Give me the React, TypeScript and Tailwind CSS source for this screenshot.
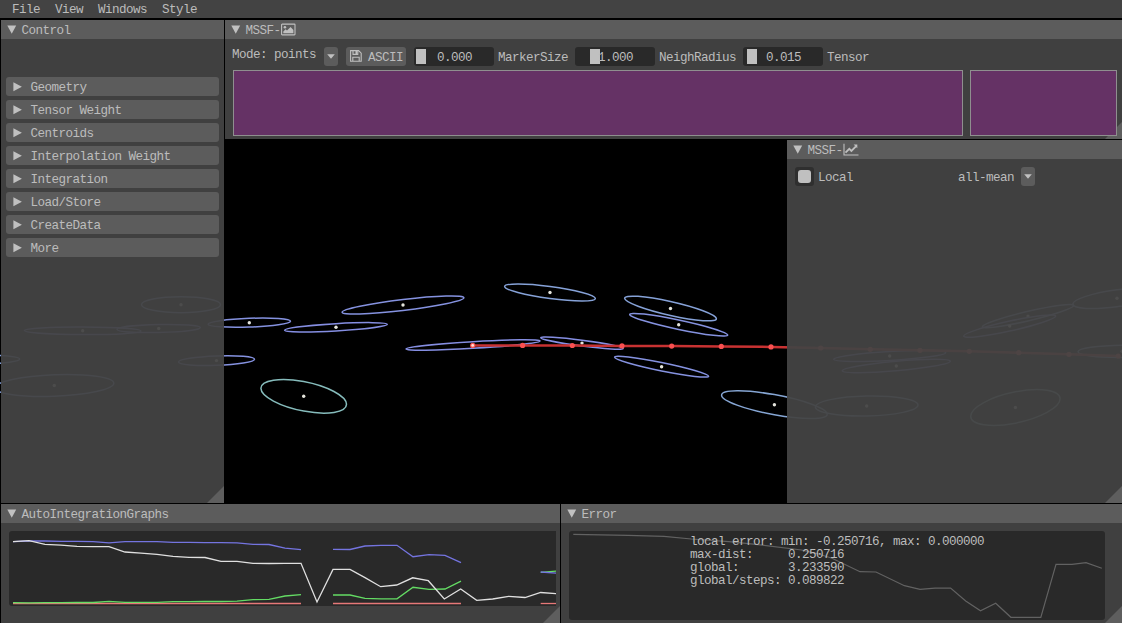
import type { ReactNode } from "react";

type EllipseRow = [cx: number, cy: number, rx: number, slant: number, ry: number, color: string];

const ELLIPSES: EllipseRow[] = [
  [181, 304.7, 39.5, 0, 8, "#84a0dc"],
  [82.7, 330.8, 58.3, 0.3, 3.8, "#8088e6"],
  [158.7, 328.5, 41.7, -0.9, 4, "#8088e6"],
  [-15, 359.7, 34.7, -0.7, 4.2, "#84a0dc"],
  [54.3, 385.5, 59.5, -2.3, 10.7, "#84a0dc"],
  [249.3, 322.7, 41.2, -1.5, 4.4, "#8592e0"],
  [216.5, 360.6, 38, -1.4, 4.7, "#8592e0"],
  [303.7, 396.3, 42.8, 8, 14.8, "#86bcbc"],
  [403, 305, 60.9, -7.2, 5.5, "#8592e0"],
  [336, 327.3, 51.4, -3, 3.6, "#858ee2"],
  [473, 345, 67, -4, 3.3, "#858ee2"],
  [550, 292.5, 45.4, 6, 6.1, "#86a2d8"],
  [670.5, 308.5, 45.9, 10.2, 7, "#86a2d8"],
  [678.7, 324.7, 49, 10.3, 4.7, "#8592e0"],
  [582, 343.1, 41.2, 5.4, 2.9, "#858ee2"],
  [661.6, 366.7, 47, 9.5, 4.2, "#8592e0"],
  [774.4, 404.7, 52.8, 9.5, 10.1, "#86a6d4"],
  [866.7, 406, 51.3, -1, 10, "#86a6d4"],
  [1015.4, 407.5, 44.7, -8.7, 15.7, "#86b0b8"],
  [889.7, 356, 56, -3.3, 4.4, "#8088e6"],
  [896.3, 366, 54, -4.7, 4.8, "#8088e6"],
  [1028, 316.1, 45.6, -10.6, 4.8, "#86a2d8"],
  [1009.7, 326.1, 46, -10, 5, "#8592e0"],
  [1117, 298.3, 44.2, -5.8, 8.5, "#86a2d8"],
  [1122, 351.3, 44, -0.5, 6.1, "#86a2d8"],
];

const TRACK: [number, number][] = [
  [472.7, 345.4], [522.6, 345.4], [572.3, 345.5], [622, 345.9], [671.7, 346.1], [721.3, 346.4], [771, 346.9],
  [820.7, 348], [870.3, 349.3], [920, 350.3], [969.3, 351.3], [1018.7, 352.7], [1069, 354.3], [1118.3, 356],
];

function Scene() {
  return (
    <svg className="absolute inset-0" width="1122" height="623" fill="none">
      {ELLIPSES.map(([cx, cy, rx, slant, ry, color], i) => (
        <g key={i}>
          <ellipse
            rx={rx}
            ry={ry}
            transform={`matrix(1 ${slant / rx} 0 1 ${cx} ${cy})`}
            stroke={color}
            strokeWidth="1.5"
            vectorEffect="non-scaling-stroke"
          />
          <circle cx={cx} cy={cy} r="1.7" fill="#e4e4dc" />
        </g>
      ))}
      <polyline points={TRACK.map((p) => p.join(",")).join(" ")} stroke="#c83232" strokeWidth="2.5" />
      {TRACK.map(([x, y], i) => (
        <circle key={i} cx={x} cy={y} r="2.6" fill="#fa5050" />
      ))}
      <circle cx="472.7" cy="345.4" r="1.4" fill="#ffe0dc" />
    </svg>
  );
}

function Down({ className = "" }: { className?: string }) {
  return (
    <svg className={className} width="10" height="9" viewBox="0 0 10 9" fill="#c0c0c0">
      <path d="M0.3 0.4H9.2L4.75 8.8Z" />
    </svg>
  );
}

function PictureIcon() {
  return (
    <svg className="ml-[0.5px]" width="15" height="13" viewBox="0 0 15 13">
      <rect x="0.6" y="1.1" width="13.4" height="10.8" rx="0.6" fill="none" stroke="#c0c0c0" strokeWidth="1.1" />
      <circle cx="3.9" cy="4.3" r="1.3" fill="#c0c0c0" />
      <path d="M2.3 10.3V8.5L4.6 6.3L6 7.6L9.6 4L12.4 6.9V10.3Z" fill="#c0c0c0" />
    </svg>
  );
}

function ChartIcon() {
  return (
    <svg className="ml-[0.5px]" width="16" height="13" viewBox="0 0 16 13" fill="none" stroke="#c0c0c0">
      <path d="M1 0.8V12H15.5" strokeWidth="1.1" />
      <path d="M2.5 9.6L6.3 5.8L8.4 7.9L12.9 3.3" strokeWidth="1.8" />
      <path d="M10.6 1.4H14.3V5.3Z" fill="#c0c0c0" stroke="none" />
    </svg>
  );
}

function SaveIcon() {
  return (
    <svg className="mb-px" width="12" height="12" viewBox="0 0 12 12" fill="none" stroke="#c0c0c0" strokeWidth="1.1">
      <path d="M0.6 0.6H8.6L11.2 3.2V11.3H0.6Z" />
      <path d="M2.8 11V7.3H9.2V11" />
      <path d="M3 0.8V4.4H7.8V0.8" />
      <path d="M6.3 1V4" strokeWidth="1.6" />
    </svg>
  );
}

function Panel({ title, icon, className, children }: {
  title: string;
  icon?: ReactNode;
  className: string;
  children: ReactNode;
}) {
  return (
    <section className={`relative flex shrink-0 flex-col overflow-hidden bg-[#434343]/95 ${className}`}>
      <svg className="absolute right-0 bottom-0" width="17" height="17" viewBox="0 0 17 17">
        <path d="M17 0V17H0Z" fill="#5e5e5e" />
      </svg>
      <header className="flex h-[19px] shrink-0 items-center bg-[#5c5c5c] pl-[6px]">
        <Down />
        <span className="ml-[4.5px] pt-[4px]">{title}</span>
        {icon}
      </header>
      {children}
    </section>
  );
}

function ComboArrow({ className = "" }: { className?: string }) {
  return (
    <span className={`flex h-[19px] w-[14px] items-center justify-center rounded-[3px] bg-[#5c5c5c] ${className}`}>
      <svg width="8" height="5" viewBox="0 0 8 5">
        <path d="M0.2 0.2H7.8L4 4.8Z" fill="#c0c0c0" />
      </svg>
    </span>
  );
}

function Slider({ value, grab, label, className }: { value: string; grab: number; label: string; className: string }) {
  return (
    <>
      <span className={`relative flex h-[19px] w-[80px] shrink-0 items-center rounded-[3px] bg-[#292929] pl-[23px] ${className}`}>
        <span className="absolute top-[2px] h-[15px] w-[10px] bg-[#c0c0c0]" style={{ left: grab }} />
        <span className="relative pt-[4px]">{value}</span>
      </span>
      <span className="ml-[4px] pt-[4px]">{label}</span>
    </>
  );
}

const SECTIONS = ["Geometry", "Tensor Weight", "Centroids", "Interpolation Weight", "Integration", "Load/Store", "CreateData", "More"];

const WHITE =
  "13,541.7 29,540.7 45,544.3 61,545.1 77,546.3 93,546.7 109,546.7 125,552 141,553.2 157,554.4 173,556.3 189,557.3 205,557.5 221,561.3 237,561.3 253,563.3 269,563.5 285,563.3 301,563.3 317,602 333,569.4 350,569.4 365,577.6 380.7,586.7 396.7,585 412.7,577.8 428.3,580.7 444.3,599 460.7,589 476.7,600.3 492.7,599 508.7,596.3 525,597.5 540.7,592.5 557,593.7";
const BLUE = [
  "13,541.7 29,541 45,541 61,541.3 77,541.3 93,541.6 109,542.8 125,541.6 141,541.6 157,541.7 173,542.3 189,542.4 205,542.6 221,542.6 237,542.8 253,544.4 269,544.5 285,548.2 301,549.6",
  "333,549.3 350,549.5 365,546 381,545.3 397,545.3 413,556.7 429,554.7 445,555.3 461,562.7",
  "540.7,572 557,573.3",
];
const GREEN = [
  "13,602.7 29,602.9 45,602.7 61,602.7 77,602.5 93,602.5 109,601.4 125,602.3 141,602.4 157,602.4 173,601.7 189,601.7 205,601.4 221,601.5 237,601.2 253,599.6 269,599.4 285,596 301,594.6",
  "333,595 350,595 365,598.3 381,598.8 397,598.9 413,587.3 429,589.3 445,589 461,581.2",
  "540.7,572.3 557,571",
];
const RED = ["13,603.5 301,603.5", "333,603.5 461,603.5", "540.7,603.5 557,603.5"];
const ERROR_LINE =
  "573.3,534.3 628,535.3 664,536.3 691.4,539 729,541.7 758,544.7 801.5,550 816,553.3 832,558.3 860,571.7 876,572 904.4,585.7 920,589.3 935,588.2 950.6,588 965.7,601 980.5,610.7 995.7,603.3 1010.9,617.3 1040.8,617.3 1056,564.3 1072,564.3 1086,562.7 1101.8,568.3";

const STATS = `local error: min: -0.250716, max: 0.000000
max-dist:     0.250716
global:       3.233590
global/steps: 0.089822`;

export default function App() {
  return (
    <div className="relative flex h-[623px] w-[1122px] flex-col overflow-hidden bg-black font-['Liberation_Mono',monospace] text-[12.6px] leading-[13px] tracking-[-0.56px] whitespace-pre text-[#bcbcbc]">
      <Scene />
      <nav className="relative mb-[2px] flex h-[18px] shrink-0 items-center gap-[15px] bg-[#434343] pt-[3px] pl-[12px]">
        <span>File</span>
        <span>View</span>
        <span>Windows</span>
        <span>Style</span>
      </nav>

      <main className="relative mb-px flex h-[483px] shrink-0 gap-px pl-px">
        <Panel title="Control" className="w-[223px]">
          <div className="mt-[38px] flex flex-col gap-1 px-[5px]">
            {SECTIONS.map((name) => (
              <div key={name} className="flex h-[19px] items-center rounded-[3px] bg-[#5c5c5c] pl-[7px]">
                <svg width="9" height="10" viewBox="0 0 9 10">
                  <path d="M0.4 0.2L8.9 4.7L0.4 9.2Z" fill="#c0c0c0" />
                </svg>
                <span className="ml-[8.5px] pt-[4px]">{name}</span>
              </div>
            ))}
          </div>
        </Panel>

        <div className="flex w-[897px] shrink-0 flex-col gap-px">
          <Panel title="MSSF-" icon={<PictureIcon />} className="h-[119px]">
            <div className="mt-[8px] flex h-[19px] items-center pl-[7px]">
              <span className="pb-[2px]">Mode: points</span>
              <ComboArrow className="ml-[8px]" />
              <button className="ml-[8px] flex h-[19px] w-[60px] items-center rounded-[3px] bg-[#5c5c5c] pl-[4px]">
                <SaveIcon />
                <span className="ml-[6px] pt-[4px]">ASCII</span>
              </button>
              <Slider className="ml-[8px]" value="0.000" grab={2} label="MarkerSize" />
              <Slider className="ml-[7px]" value="1.000" grab={15} label="NeighRadius" />
              <Slider className="ml-[7px]" value="0.015" grab={4} label="Tensor" />
            </div>
            <div className="relative mt-[4px] flex h-[66px] gap-[7px] pl-[8px]">
              <div className="w-[730px] border border-[#8f8f8f] bg-[#653265]" />
              <div className="w-[147px] border border-[#8f8f8f] bg-[#653265]" />
            </div>
          </Panel>
          <div className="flex justify-end">
            <Panel title="MSSF-" icon={<ChartIcon />} className="h-[363px] w-[335px]">
              <div className="mt-[8px] flex h-[19px] items-center pl-[8px]">
                <span className="flex size-[19px] items-center justify-center rounded-[3px] bg-[#2f2f2f]">
                  <span className="size-[13px] rounded-[3px] bg-[#c0c0c0]" />
                </span>
                <span className="ml-[4px] w-[140px] pt-[4px]">Local</span>
                <span className="pt-[4px]">all-mean</span>
                <ComboArrow className="ml-[7px]" />
              </div>
            </Panel>
          </div>
        </div>
      </main>

      <footer className="relative flex h-[119px] shrink-0 gap-px pl-px">
        <Panel title="AutoIntegrationGraphs" className="w-[559px]">
          <svg className="relative mt-[8px] ml-[8px]" width="547" height="75" viewBox="9 531 547 75" fill="none" strokeWidth="1.3">
            <path d="M556 531H12A3 3 0 0 0 9 534V603A3 3 0 0 0 12 606H556Z" fill="#292929" />
            {RED.map((p) => <polyline key={p} points={p} stroke="#e67878" />)}
            {GREEN.map((p) => <polyline key={p} points={p} stroke="#64dc64" />)}
            {BLUE.map((p) => <polyline key={p} points={p} stroke="#7474e0" />)}
            <polyline points={WHITE} stroke="#e0e0e0" />
          </svg>
        </Panel>
        <Panel title="Error" className="w-[561px]">
          <div className="relative mt-[8px] ml-[8px] h-[89px] w-[536px] rounded-[3px] bg-[#292929] pt-[5px] pl-[121px]">
            <svg className="absolute inset-0" width="536" height="89" viewBox="569 531 536 89" fill="none">
              <polyline points={ERROR_LINE} stroke="#626262" strokeWidth="1.2" />
            </svg>
            <pre className="relative font-['Liberation_Mono',monospace]">{STATS}</pre>
          </div>
        </Panel>
      </footer>
    </div>
  );
}
